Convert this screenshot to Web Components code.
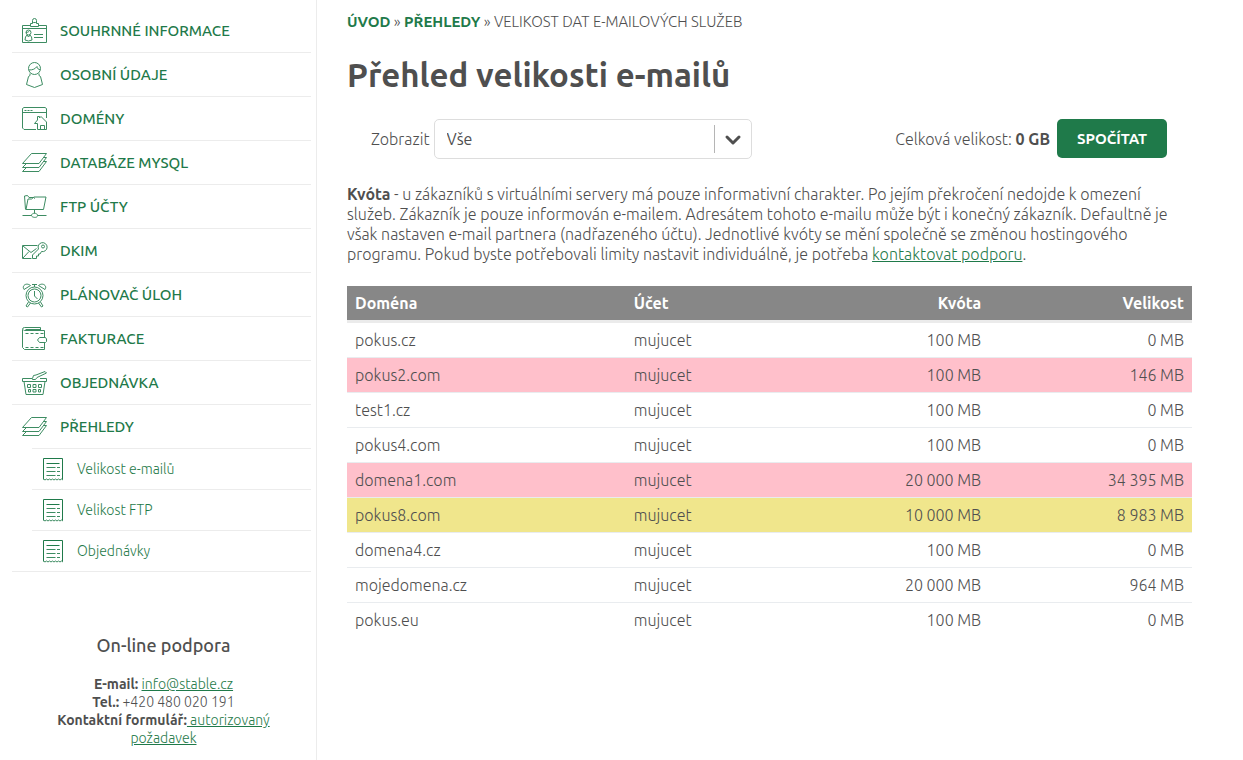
<!DOCTYPE html>
<html lang="cs">
<head>
<meta charset="utf-8">
<meta name="viewport" content="width=device-width, initial-scale=1">
<title>Přehled velikosti e-mailů</title>
<style>
    :root {
        --green: #1f7a4a;
        --text: #4f4f4f;
        --line: #ececec;
    }
    body {
        margin: 0;
        background: #fff;
        color: var(--text);
        font: 300 16px/20px Ubuntu, "Open Sans", sans-serif;
    }
</style>
</head>
<body>
<admin-page>
    <nav-menu slot="side"></nav-menu>
    <support-box slot="side" heading="On-line podpora"></support-box>
    <bread-crumbs></bread-crumbs>
    <page-title>Přehled velikosti e-mailů</page-title>
    <size-filter total="0 GB"></size-filter>
    <quota-note></quota-note>
    <quota-table></quota-table>
</admin-page>

<script>
const ICONS = {
    card: `<path d="M8.5 7.5H.5v17h24v-17h-8M1 10.5h23M8.5 8.5v-3h2l1-1h2l1 1h2v3zM10.5 5V2.5a2 2 0 0 1 4 0V5M12 16.5h9M12 19.5h9"/><circle cx="6.5" cy="14.5" r="2.5"/><path d="M4 14.5c2 0 3-1 3.5-2M5 17l-1.500 2-.5 3 3.5 1 3.5-1-.5-3L8 17l-1.500 2z"/>`,
    person: `<circle cx="12.5" cy="6.5" r="6"/><path d="M7 8c4 0 6-1 8-3.5 0 2 1.500 3 3 3M8 11.500v2l-1.500 1-2 8 8 3 8-3-2-8-1.500-1v-2"/>`,
    domain: `<path d="M14 23.500H2l-1.500-1.500V2.500L2 1.500h21l1.500 1V12M.5 6.500h24M2.500 4.500h2M5.500 4.500h2M8.500 4.500h2M15.500 23.500v-6h-3l3-3.500v-3.500h2v1.500l1.500-1.500 5.500 5.500v7.500zM18.500 23.500v-4h4v4"/>`,
    layers: `<path d="M.5 13.500l9-10h15l-7.500 10zM4.500 13.500l-4 4H17l7.500-10h-3M4.500 17.500l-4 4H17l7.500-10h-3"/>`,
    folder: `<path d="M3.500 15.500L2.500 2l3-.5 1.500 2h4.500l1.500 1M4 15.500h17.500l2.500-12.500H12L9.500 5H6zM12.500 15.500v4M.5 21.500h9M15.500 21.500h9M9.500 21.500c0-3 6-3 6 0s-6 2-6 0z"/>`,
    key: `<path d="M15.500 7.500H.5v13h9M1 8l8 6.500 5.500-4M1 20l6-6.500"/><path d="M16.500 11a4.500 4.500 0 1 1 3 2.500l-1.500 2.500h-1.500v2h-2v2.500h-4V17z"/><circle cx="21" cy="8.500" r="1.500"/>`,
    clock: `<circle cx="12.500" cy="13.500" r="8.500"/><circle cx="12.500" cy="13.500" r="6.500"/><path d="M12.500 9v5l3 3M12.500 5V2.500M10 2.500h5M2 7.500C-.5 4 4 0 8.500 3.500zM23 7.500c2.500-3.500-2-7.500-6.500-4zM6.500 20l-2.500 4 1.500 1 3-4M18.500 20l2.500 4-1.500 1-3-4"/>`,
    wallet: `<path d="M18.500 4.500v-3H2.500a2 2 0 0 0-2 2v18l2 2h20v-7M22.500 11.500v-7h-20a2 2 0 0 1-1.500-1M3.500 3.500h15M15.500 14l2-2.500h6l1 1.500v2.500l-1 1H17.500z"/><path stroke-dasharray="3 2" d="M3.500 7.500h18M3.500 21.500h18"/>`,
    basket: `<path d="M10 8.500H.5v3h24v-3H18M2 11.500l2 13h17l2-13M10.500 8.500l1-3 2.500-.5L23 1.500l1.500 1.500-9.500 4.500-1.500 2h-3zM5.500 14.500h3v3h-3zM11 14.500h3v3h-3zM16.500 14.500h3v3h-3zM6.500 19.500h2v2.500h-2zM11 19.500h3v2.500h-3zM16.500 19.500h2v2.500h-2z"/>`,
    sheet: `<g stroke="#1f7a4a"><path d="M2.500 23.500v-21h19v21"/><path d="M5.500 7.500h13"/></g><path d="M2.500 23l1.500 1 1.500-1 1.500 1 1.500-1 1.500 1 1.500-1 1.500 1 1.500-1 1.500 1 1.500-1 1.500 1 1.500-1 1.500 1"/><path d="M5.500 11.500h9M16 11.500h3M5.500 15.500h9M16 15.500h3M5.500 19.500h9M16 19.500h3"/>`
};

const MENU = [
    ['card', 'Souhrnné informace'],
    ['person', 'Osobní údaje'],
    ['domain', 'Domény'],
    ['layers', 'Databáze MySQL'],
    ['folder', 'FTP účty'],
    ['key', 'DKIM'],
    ['clock', 'Plánovač úloh'],
    ['wallet', 'Fakturace'],
    ['basket', 'Objednávka'],
    ['layers', 'Přehledy', ['Velikost e-mailů', 'Velikost FTP', 'Objednávky']]
];

const ROWS = [
    ['pokus.cz', 'mujucet', '100 MB', '0 MB'],
    ['pokus2.com', 'mujucet', '100 MB', '146 MB', 'over'],
    ['test1.cz', 'mujucet', '100 MB', '0 MB'],
    ['pokus4.com', 'mujucet', '100 MB', '0 MB'],
    ['domena1.com', 'mujucet', '20 000 MB', '34 395 MB', 'over'],
    ['pokus8.com', 'mujucet', '10 000 MB', '8 983 MB', 'near'],
    ['domena4.cz', 'mujucet', '100 MB', '0 MB'],
    ['mojedomena.cz', 'mujucet', '20 000 MB', '964 MB'],
    ['pokus.eu', 'mujucet', '100 MB', '0 MB']
];

class Component extends HTMLElement {
    connectedCallback() {
        if (!this.shadowRoot) this.attachShadow({mode: 'open'});
        this.shadowRoot.innerHTML = `<style>${this.css()}</style>${this.render()}`;
    }
    css() { return ''; }
    render() { return '<slot></slot>'; }
}

class AdminPage extends Component {
    css() {
        return `
            :host { display: flex; min-height: 100vh; }
            aside { box-sizing: border-box; flex: 0 0 317px; padding: 9px 5px 0 12px; border-right: 1px solid var(--line); }
            main { flex: 1; min-width: 0; padding: 12px 51px 24px 30px; }
        `;
    }
    render() {
        return `<aside><slot name="side"></slot></aside><main><slot></slot></main>`;
    }
}

class LineIcon extends Component {
    css() {
        return `
            :host { display: block; flex: none; width: 26px; height: 26px; }
            svg { display: block; fill: none; stroke: #3d8c62; stroke-width: 1; }
        `;
    }
    render() {
        return `<svg width="26" height="26" viewBox="0 0 26 26" aria-hidden="true">${ICONS[this.getAttribute('name')]}</svg>`;
    }
}

class NavMenu extends Component {
    css() {
        return `
            :host { display: block; }
            ul { list-style: none; margin: 0; padding: 0; }
            a { display: flex; align-items: center; box-sizing: border-box; color: var(--green); text-decoration: none; border-bottom: 1px solid var(--line); }
            .top { height: 44px; padding: 0 10px; gap: 12px; font-size: 15px; font-weight: 500; text-transform: uppercase; }
            .open { margin-bottom: -1px; border-bottom: 0; }
            ul ul { border-bottom: 1px solid var(--line); }
            ul ul li { margin-left: 20px; }
            .sub { height: 41px; padding: 0 9px; gap: 10px; font-size: 14px; border-top: 1px solid var(--line); border-bottom: 0; }
        `;
    }
    render() {
        return `<nav><ul>${MENU.map(([icon, label, children]) => `
            <li><a class="top${children ? ' open' : ''}" href="#"><line-icon name="${icon}"></line-icon>${label}</a>
            ${children ? `<ul>${children.map(c => `<li><a class="sub" href="#"><line-icon name="sheet"></line-icon>${c}</a></li>`).join('')}</ul>` : ''}
            </li>`).join('')}</ul></nav>`;
    }
}

class SupportBox extends Component {
    css() {
        return `
            :host { display: block; padding: 61px 30px 12px 34px; text-align: center; font-size: 14px; line-height: 18px; }
            h2 { margin: 0 0 18px; font-size: 18px; line-height: 24px; font-weight: 500; }
            p { margin: 0; }
            b { font-weight: 700; }
            a { color: var(--green); }
        `;
    }
    render() {
        return `<h2>${this.getAttribute('heading')}</h2>
            <p><b>E-mail:</b> <a href="mailto:info@stable.cz">info@stable.cz</a><br>
            <b>Tel.:</b> +420 480 020 191<br>
            <b>Kontaktní formulář:</b><a href="#"> autorizovaný požadavek</a></p>`;
    }
}

class BreadCrumbs extends Component {
    css() {
        return `
            :host { display: block; font-size: 15px; text-transform: uppercase; font-weight: 300; }
            a { color: var(--green); font-weight: 700; text-decoration: none; }
        `;
    }
    render() {
        return `<nav><a href="#">Úvod</a> » <a href="#">Přehledy</a> » Velikost dat e-mailových služeb</nav>`;
    }
}

class PageTitle extends Component {
    css() {
        return `
            :host { display: block; padding: 23px 0 25px; }
            h1 { margin: 0; font-size: 33px; line-height: 39px; font-weight: 700; }
        `;
    }
    render() { return '<h1><slot></slot></h1>'; }
}

class SizeFilter extends Component {
    css() {
        return `
            :host { display: flex; align-items: flex-start; justify-content: space-between; padding: 0 25px 0 24px; }
            .show, .total { display: flex; align-items: center; }
            .show { gap: 4px; }
            .total { gap: 7px; }
            .box { display: grid; width: 318px; height: 40px; box-sizing: border-box; border: 1px solid #ddd; border-radius: 5px; }
            select, .arrow { grid-area: 1 / 1; }
            select { appearance: none; border: 0; background: none; padding: 0 52px 0 12px; font: inherit; font-weight: 400; color: inherit; }
            .arrow { display: flex; align-items: center; justify-self: end; pointer-events: none; width: 36px; margin: 5px 0; border-left: 1px solid #b5b5b5; }
            .arrow svg { margin: 2px 0 0 9px; fill: none; stroke: var(--text); stroke-width: 3; stroke-linecap: round; stroke-linejoin: round; }
            b { font-weight: 700; }
            button { border: 0; border-radius: 5px; height: 39px; width: 110px; background: var(--green); color: #fff; font: inherit; font-size: 15px; font-weight: 700; text-transform: uppercase; }
        `;
    }
    render() {
        return `<div class="show"><label for="show">Zobrazit</label>
            <div class="box"><select id="show"><option>Vše</option></select>
            <span class="arrow"><svg width="18" height="12" viewBox="0 0 18 12"><path d="M3 3l6 6 6-6"/></svg></span></div></div>
            <div class="total"><span>Celková velikost: <b>${this.getAttribute('total')}</b></span>
            <button type="button">Spočítat</button></div>`;
    }
}

class QuotaNote extends Component {
    css() {
        return `
            :host { display: block; padding: 25px 0 22px; }
            p { margin: 0; }
            b { font-weight: 700; }
            a { color: var(--green); }
        `;
    }
    render() {
        return `<p><b>Kvóta</b> - u zákazníků s virtuálními servery má pouze informativní charakter. Po jejím překročení nedojde k omezení služeb. Zákazník je pouze informován e-mailem. Adresátem tohoto e-mailu může být i konečný zákazník. Defaultně je však nastaven e-mail partnera (nadřazeného účtu). Jednotlivé kvóty se mění společně se změnou hostingového programu. Pokud byste potřebovali limity nastavit individuálně, je potřeba <a href="#">kontaktovat podporu</a>.</p>`;
    }
}

class QuotaTable extends Component {
    css() {
        return `
            :host { display: block; }
            table { width: 100%; border-collapse: separate; border-spacing: 0; table-layout: fixed; }
            th, td { box-sizing: border-box; padding: 0 8px; text-align: left; }
            th { height: 37px; background: #878787; background-clip: padding-box; color: #fff; font-weight: 700; border-bottom: 3px solid #ebebeb; }
            td { height: 35px; border-bottom: 1px solid #e9ecef; }
            tr:last-child td { border-bottom-color: transparent; }
            .num { text-align: right; }
            .over { background: #ffc0cb; }
            .near { background: #f0e68c; }
        `;
    }
    render() {
        return `<table>
            <colgroup><col style="width:33%"><col style="width:21%"><col style="width:22%"><col style="width:24%"></colgroup>
            <thead><tr><th>Doména</th><th>Účet</th><th class="num">Kvóta</th><th class="num">Velikost</th></tr></thead>
            <tbody>${ROWS.map(([domain, account, quota, size, state = '']) => `
                <tr class="${state}"><td>${domain}</td><td>${account}</td><td class="num">${quota}</td><td class="num">${size}</td></tr>`).join('')}
            </tbody></table>`;
    }
}

customElements.define('line-icon', LineIcon);
customElements.define('nav-menu', NavMenu);
customElements.define('support-box', SupportBox);
customElements.define('bread-crumbs', BreadCrumbs);
customElements.define('page-title', PageTitle);
customElements.define('size-filter', SizeFilter);
customElements.define('quota-note', QuotaNote);
customElements.define('quota-table', QuotaTable);
customElements.define('admin-page', AdminPage);
</script>
</body>
</html>
